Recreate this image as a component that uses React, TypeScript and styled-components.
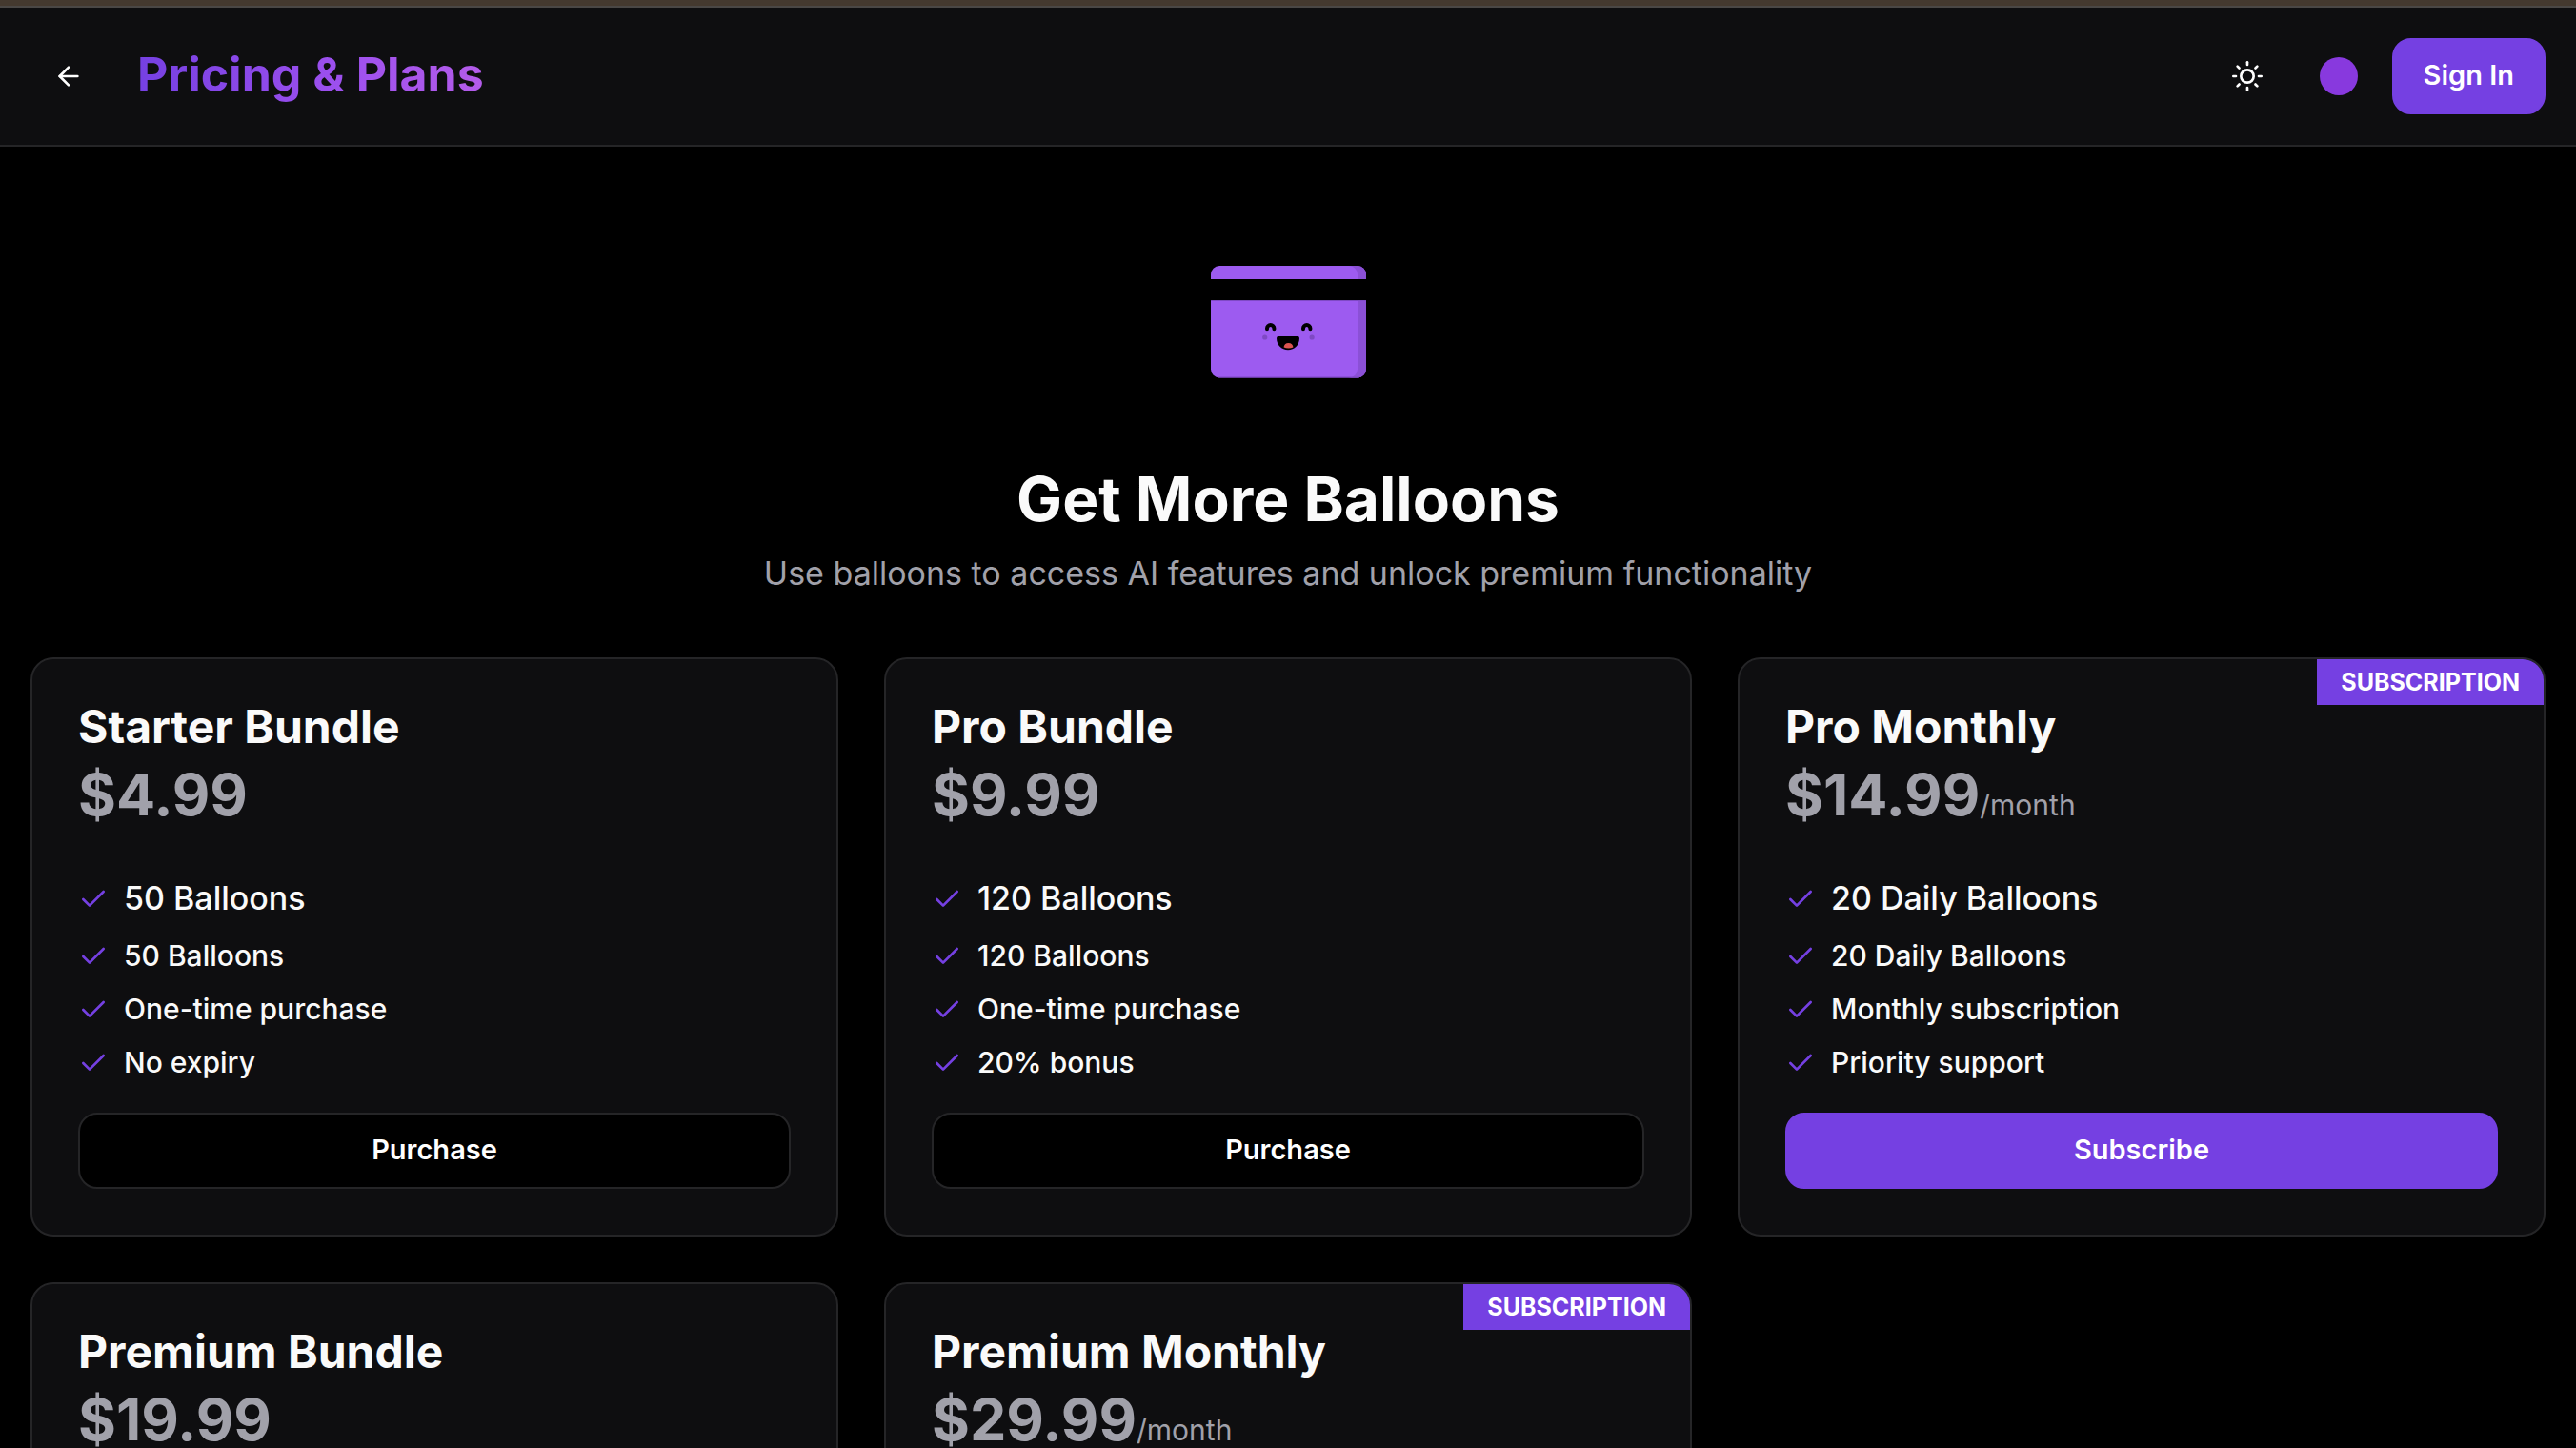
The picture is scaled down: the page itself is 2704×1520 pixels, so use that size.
import React from "react";
import styled, { createGlobalStyle, css } from "styled-components";
import { ArrowLeft, Check } from "lucide-react";
import { FiSun } from "react-icons/fi";

const color = {
  page: "#000000",
  surface: "#0e0e10",
  border: "#252527",
  text: "#fafafa",
  muted: "#a1a1aa",
  primary: "#7540e2",
};

const GlobalStyle = createGlobalStyle`
  * { box-sizing: border-box; }
  body {
    margin: 0;
    background: ${color.page};
    color: ${color.text};
    font-family: Inter, "Liberation Sans", sans-serif;
  }
  h1, h2, h3, p, ul { margin: 0; padding: 0; }
`;

const Page = styled.div`
  display: flex;
  flex-direction: column;
  height: 100vh;
  overflow-y: auto;
  scrollbar-width: none;
`;

const TopStrip = styled.div`
  flex: none;
  height: 8px;
  background: #44392f;
  border-bottom: 2px solid #4a4745;
`;

const Header = styled.header`
  flex: none;
  display: flex;
  align-items: center;
  justify-content: space-between;
  padding: 32px;
  background: ${color.surface};
  border-bottom: 2px solid ${color.border};
`;

const HeaderGroup = styled.div<{ $gap: number }>`
  display: flex;
  align-items: center;
  gap: ${({ $gap }) => $gap}px;
`;

const PageTitle = styled.h1`
  padding-bottom: 4px;
  font-size: 50px;
  line-height: 64px;
  font-weight: 700;
  color: transparent;
  background: linear-gradient(90deg, #7540e2, #9b4fee 55%, #b45cea);
  background-clip: text;
  -webkit-background-clip: text;
`;

const IconButton = styled.button`
  display: flex;
  align-items: center;
  justify-content: center;
  width: 80px;
  height: 80px;
  padding: 0;
  border: 0;
  border-radius: 20px;
  background: transparent;
  color: #ffffff;
  cursor: pointer;
`;

const AccentDot = styled.span`
  width: 40px;
  height: 40px;
  border-radius: 50%;
  background: #8839de;
`;

const Button = styled.button<{ $outline?: boolean }>`
  height: 80px;
  padding: 0 31px 2px;
  border: 2px solid ${color.primary};
  border-radius: 20px;
  background: ${color.primary};
  color: #ffffff;
  font-family: inherit;
  font-size: 29px;
  line-height: 40px;
  font-weight: 600;
  cursor: pointer;
  ${({ $outline }) =>
    $outline &&
    css`
      border-color: ${color.border};
      background: ${color.page};
    `}
`;

const Main = styled.main`
  padding: 64px 32px;
`;

const Hero = styled.section`
  display: flex;
  flex-direction: column;
  align-items: center;
  margin-bottom: 64px;
  text-align: center;
`;

const HeroTitle = styled.h2`
  margin: 26px 0 14px;
  font-size: 64px;
  line-height: 80px;
  font-weight: 700;
`;

const HeroText = styled.p`
  font-size: 34px;
  line-height: 48px;
  color: ${color.muted};
`;

const PlanGrid = styled.section`
  display: grid;
  grid-template-columns: repeat(3, minmax(0, 1fr));
  gap: 48px;
`;

const Card = styled.article`
  position: relative;
  display: flex;
  flex-direction: column;
  padding: 48px;
  overflow: hidden;
  border: 2px solid ${color.border};
  border-radius: 24px;
  background: ${color.surface};
`;

const Badge = styled.span`
  position: absolute;
  top: 0;
  right: 0;
  padding: 0 25px;
  background: ${color.primary};
  color: #ffffff;
  font-size: 25px;
  line-height: 48px;
  font-weight: 700;
`;

const PlanName = styled.h3`
  margin-bottom: 10px;
  font-size: 48px;
  line-height: 46px;
  font-weight: 700;
`;

const Price = styled.p`
  margin-bottom: 48px;
  font-size: 61px;
  line-height: 76px;
  font-weight: 700;
  color: ${color.muted};
`;

const Period = styled.span`
  font-size: 30px;
  line-height: 36px;
  font-weight: 400;
`;

const FeatureList = styled.ul`
  display: flex;
  flex-direction: column;
  gap: 16px;
  margin-bottom: 32px;
  list-style: none;
`;

const Feature = styled.li<{ $lead: boolean }>`
  display: flex;
  align-items: center;
  gap: 16px;
  height: ${({ $lead }) => ($lead ? 48 : 40)}px;
  font-size: ${({ $lead }) => ($lead ? 34 : 30)}px;
  line-height: 36px;
  font-weight: 500;

  svg {
    flex: none;
    color: ${color.primary};
  }
`;

const FeatureText = styled.span`
  padding-bottom: 2px;
`;

type Plan = {
  name: string;
  price: string;
  subscription?: boolean;
  features: string[];
};

const plans: Plan[] = [
  { name: "Starter Bundle", price: "$4.99", features: ["50 Balloons", "50 Balloons", "One-time purchase", "No expiry"] },
  { name: "Pro Bundle", price: "$9.99", features: ["120 Balloons", "120 Balloons", "One-time purchase", "20% bonus"] },
  {
    name: "Pro Monthly",
    price: "$14.99",
    subscription: true,
    features: ["20 Daily Balloons", "20 Daily Balloons", "Monthly subscription", "Priority support"],
  },
  { name: "Premium Bundle", price: "$19.99", features: ["One-time purchase", "No expiry"] },
  { name: "Premium Monthly", price: "$29.99", subscription: true, features: ["Monthly subscription", "Priority support"] },
];

function CardMascot() {
  return (
    <svg width="240" height="240" viewBox="0 0 240 240" fill="none" aria-hidden="true">
      <path d="M39 75V70a9 9 0 0 1 9-9H193a9 9 0 0 1 9 9V75Z" fill="#9d5bf0" />
      <path d="M184 61H193a9 9 0 0 1 9 9V75H193V70a9 9 0 0 0-9-9Z" fill="#8b50d6" />
      <path d="M39 97H202V169.500a9 9 0 0 1-9 9H48a9 9 0 0 1-9-9Z" fill="#9d5bf0" />
      <path d="M193 97H202V169.500a9 9 0 0 1-9 9H184a9 9 0 0 0 9-9Z" fill="#8b50d6" />
      <path d="M39 97.500H202M46 178H195" stroke="#7f49c4" />
      <g stroke="#000000" strokeWidth="4" strokeLinecap="round">
        <path d="M98 127.200v-.4a3.700 3.700 0 0 1 7.400 0v.4" />
        <path d="M136 127.200v-.4a3.700 3.700 0 0 1 7.400 0v.4" />
      </g>
      <circle cx="95.700" cy="136" r="2.600" fill="#7f49c4" />
      <circle cx="145.100" cy="136" r="2.600" fill="#7f49c4" />
      <path d="M110 135H130a2 2 0 0 1 2 2c0 7-5.200 12.300-12 12.300S108 144 108 137a2 2 0 0 1 2-2Z" fill="#000000" />
      <path d="M115.600 146.500c0-2.700 2.100-4.500 4.900-4.500s4.900 1.800 4.900 4.500c-1.400.7-3 1-4.900 1s-3.500-.3-4.900-1Z" fill="#dc5450" />
    </svg>
  );
}

function PlanCard({ plan }: { plan: Plan }) {
  return (
    <Card>
      {plan.subscription && <Badge>SUBSCRIPTION</Badge>}
      <PlanName>{plan.name}</PlanName>
      <Price>
        {plan.price}
        {plan.subscription && <Period>/month</Period>}
      </Price>
      <FeatureList>
        {plan.features.map((feature, index) => (
          <Feature key={index} $lead={index === 0}>
            <Check size={32} />
            <FeatureText>{feature}</FeatureText>
          </Feature>
        ))}
      </FeatureList>
      <Button type="button" $outline={!plan.subscription}>
        {plan.subscription ? "Subscribe" : "Purchase"}
      </Button>
    </Card>
  );
}

export default function App() {
  return (
    <Page>
      <GlobalStyle />
      <TopStrip />
      <Header>
        <HeaderGroup $gap={32}>
          <IconButton type="button" aria-label="Back">
            <ArrowLeft size={32} />
          </IconButton>
          <PageTitle>Pricing &amp; Plans</PageTitle>
        </HeaderGroup>
        <HeaderGroup $gap={16}>
          <IconButton type="button" aria-label="Toggle theme">
            <FiSun size={32} />
          </IconButton>
          <IconButton type="button" aria-label="Accent color">
            <AccentDot />
          </IconButton>
          <Button type="button">Sign In</Button>
        </HeaderGroup>
      </Header>
      <Main>
        <Hero>
          <CardMascot />
          <HeroTitle>Get More Balloons</HeroTitle>
          <HeroText>Use balloons to access AI features and unlock premium functionality</HeroText>
        </Hero>
        <PlanGrid>
          {plans.map((plan) => (
            <PlanCard key={plan.name} plan={plan} />
          ))}
        </PlanGrid>
      </Main>
    </Page>
  );
}
